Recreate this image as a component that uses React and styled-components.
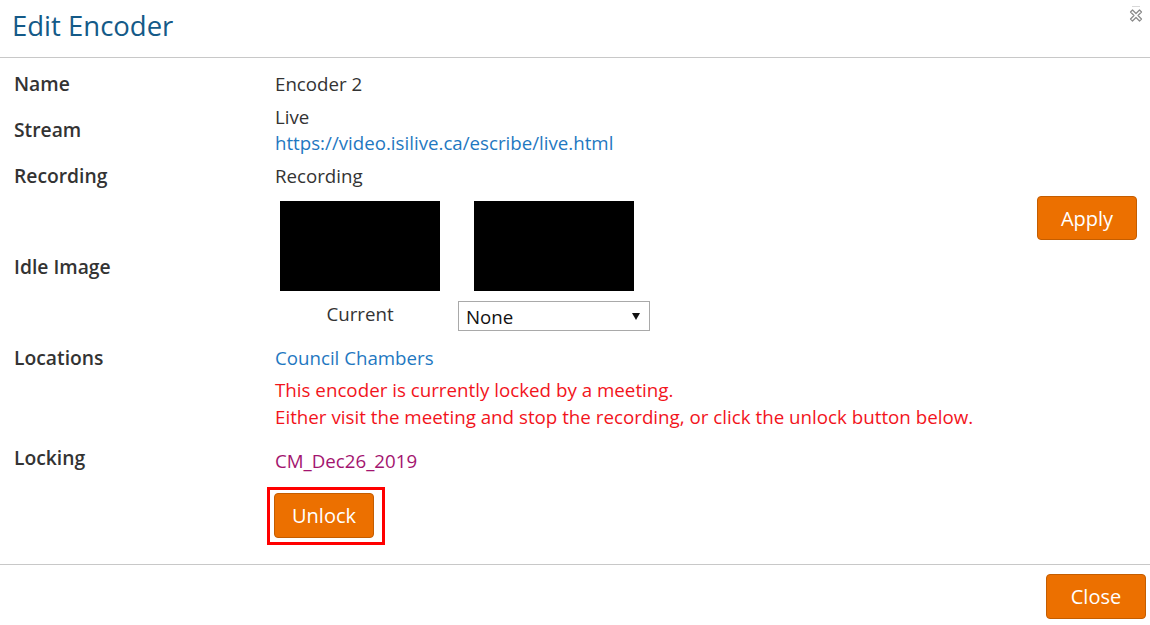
import React from "react";
import styled, { createGlobalStyle } from "styled-components";

const Global = createGlobalStyle`
  html, body { margin: 0; padding: 0; background: #fff; }
  body { font-family: "Open Sans", "Noto Sans", Arial, sans-serif; color: #333; }
  * { box-sizing: border-box; }
`;

const Dialog = styled.div`
  width: 1150px;
  height: 625px;
  display: flex;
  flex-direction: column;
  background: #fff;
`;

const Header = styled.div`
  height: 58px;
  border-bottom: 1px solid #c8c8c8;
  display: flex;
  justify-content: space-between;
  align-items: flex-start;
  padding: 10px 6px 0 12px;
`;

const Title = styled.h1`
  margin: 0;
  font-size: 27.5px;
  line-height: 32px;
  font-weight: 400;
  color: #145a88;
`;

const CloseX = styled.button`
  border: 0;
  background: none;
  padding: 0;
  margin-top: -4px;
  width: 16px;
  height: 16px;
  cursor: pointer;
  display: flex;
`;

const Body = styled.div`
  flex: 1;
  display: grid;
  grid-template-columns: 261px 1fr auto;
  grid-auto-rows: auto;
  row-gap: 7px;
  align-content: start;
  padding: 13px 13px 0 14px;
`;

const Label = styled.div`
  font-size: 19.3px;
  line-height: 26px;
  font-weight: 600;
  color: #333;
  align-self: ${(p) => (p.$center ? "center" : "start")};
  padding-top: ${(p) => p.$top || 0}px;
`;

const Value = styled.div`
  font-size: 18.7px;
  line-height: 26px;
  color: #333;
  grid-column: ${(p) => (p.$span ? "2 / 4" : "2")};
  padding-top: ${(p) => p.$top || 0}px;
`;

const Link = styled.a`
  color: #1f78c1;
  text-decoration: none;
  display: block;
`;

const Warning = styled.div`
  color: #f2141c;
  font-size: 18.75px;
  line-height: 27px;
  margin-top: 5px;
`;

const LockName = styled.div`
  color: #a3146f;
`;

const Images = styled.div`
  display: flex;
  gap: 13px;
  padding: 5px 0 7px;
`;

const ImgCol = styled.div`
  width: ${(p) => p.$w}px;
  display: flex;
  flex-direction: column;
  align-items: center;
`;

const Thumb = styled.div`
  width: 160px;
  height: 90px;
  background: #000;
`;

const Caption = styled.div`
  margin-top: 10px;
  font-size: 18.7px;
  line-height: 26px;
  color: #333;
`;

const SelectWrap = styled.div`
  position: relative;
  margin-top: 10px;
  width: 192px;
  height: 30px;
`;

const Select = styled.select`
  appearance: none;
  -webkit-appearance: none;
  width: 100%;
  height: 100%;
  border: 1px solid #a9a9a9;
  border-radius: 0;
  background: #fff;
  font-family: "Open Sans", Arial, sans-serif;
  font-size: 18.7px;
  color: #111;
  padding: 0 0 0 7px;
`;

const Caret = styled.span`
  position: absolute;
  right: 10px;
  top: 12px;
  width: 0;
  height: 0;
  border-left: 4px solid transparent;
  border-right: 4px solid transparent;
  border-top: 7px solid #111;
  pointer-events: none;
`;

const Button = styled.button`
  width: 100px;
  height: ${(p) => p.$h || 45}px;
  background: #ec7000;
  border: 1px solid #c45d00;
  border-radius: 4px;
  color: #fff;
  font-family: "Open Sans", Arial, sans-serif;
  font-size: 20px;
  cursor: pointer;
  padding: 0;
`;

const ApplyCell = styled.div`
  grid-column: 3;
  align-self: start;
`;

const Highlight = styled.div`
  display: inline-block;
  margin: 13px 0 0 -8px;
  border: 3px solid #f00;
  padding: 3px 8px 4px 4px;
  line-height: 0;
`;

const Footer = styled.div`
  border-top: 1px solid #c8c8c8;
  display: flex;
  justify-content: flex-end;
  padding: 9px 4px 6px 0;
`;

function XIcon() {
  return (
    <svg width="16" height="16" viewBox="0 0 16 16">
      <line x1="4" y1="0.5" x2="12" y2="0.5" stroke="#d8d8d8" strokeWidth="1" />
      <polygon
        points="2.5,6 4.5,4 8,7.5 11.5,4 13.5,6 10,9.5 13.5,13 11.5,15 8,11.5 4.5,15 2.5,13 6,9.5"
        fill="#fff"
        stroke="#8a8a8a"
        strokeWidth="1.2"
        strokeLinejoin="round"
      />
    </svg>
  );
}

export default function App() {
  return (
    <>
      <Global />
      <Dialog>
        <Header>
          <Title>Edit Encoder</Title>
          <CloseX aria-label="close">
            <XIcon />
          </CloseX>
        </Header>
        <Body>
          <Label>Name</Label>
          <Value $span>Encoder 2</Value>

          <Label $center>Stream</Label>
          <Value $span>
            Live
            <Link href="#">https://video.isilive.ca/escribe/live.html</Link>
          </Value>

          <Label>Recording</Label>
          <Value $span>Recording</Value>

          <Label $center>Idle Image</Label>
          <Value>
            <Images>
              <ImgCol $w={170}>
                <Thumb />
                <Caption>Current</Caption>
              </ImgCol>
              <ImgCol $w={192}>
                <Thumb />
                <SelectWrap>
                  <Select defaultValue="none">
                    <option value="none">None</option>
                  </Select>
                  <Caret />
                </SelectWrap>
              </ImgCol>
            </Images>
          </Value>
          <ApplyCell>
            <Button $h={44}>Apply</Button>
          </ApplyCell>

          <Label>Locations</Label>
          <Value $span>
            <Link href="#">Council Chambers</Link>
            <Warning>
              This encoder is currently locked by a meeting.
              <br />
              Either visit the meeting and stop the recording, or click the unlock button below.
            </Warning>
          </Value>

          <Label $top={8}>Locking</Label>
          <Value $span $top={11}>
            <LockName>CM_Dec26_2019</LockName>
            <Highlight>
              <Button>Unlock</Button>
            </Highlight>
          </Value>
        </Body>
        <Footer>
          <Button>Close</Button>
        </Footer>
      </Dialog>
    </>
  );
}
